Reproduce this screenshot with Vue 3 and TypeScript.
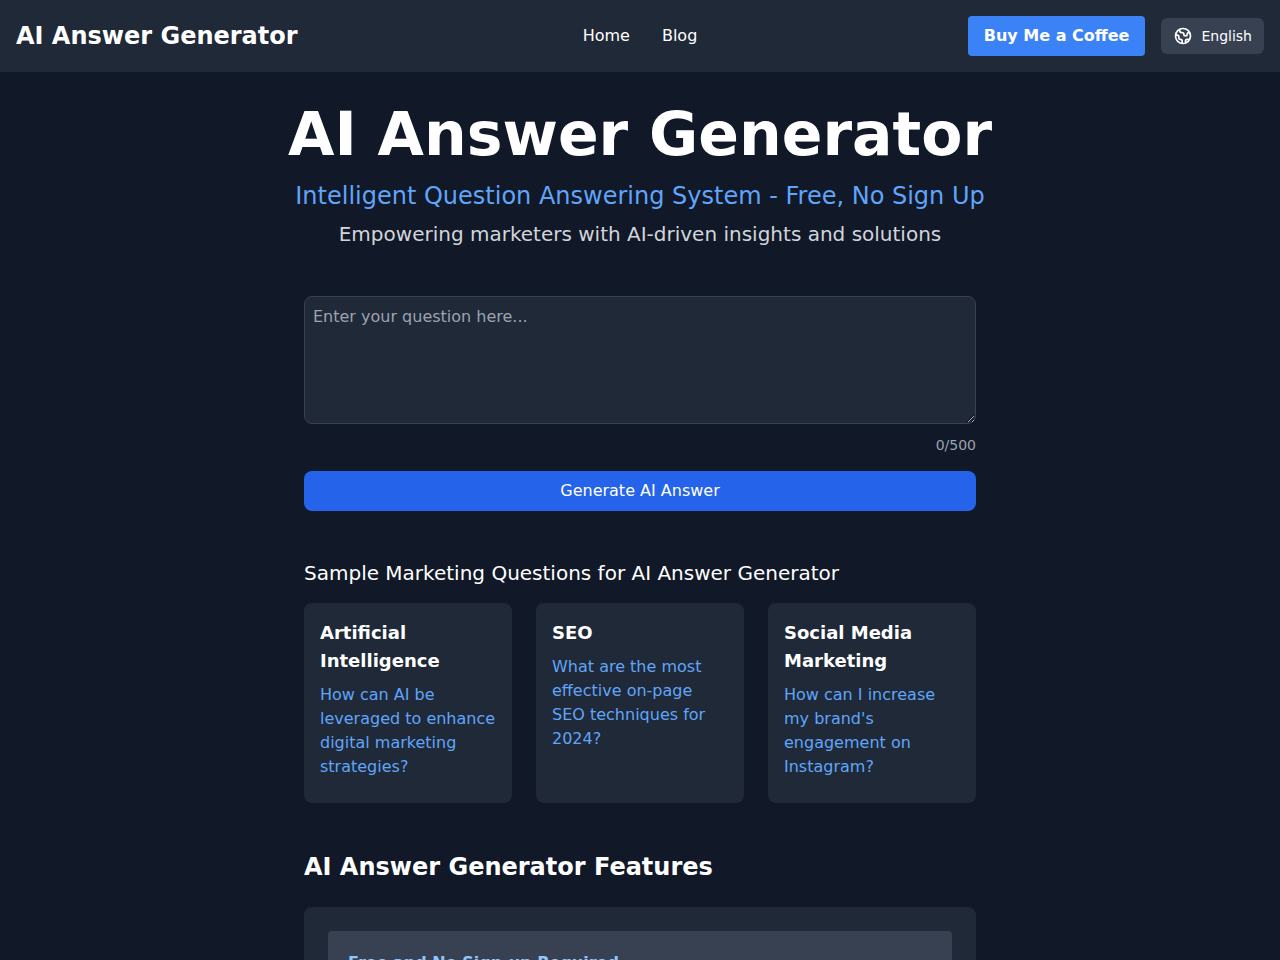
<script setup lang="ts">
import { computed, ref } from 'vue'

interface Sample {
  topic: string
  question: string
}

const maxLength = 500
const question = ref<string>('')
const counter = computed<string>(() => `${question.value.length}/${maxLength}`)

const samples: Sample[] = [
  {
    topic: 'Artificial Intelligence',
    question: 'How can AI be leveraged to enhance digital marketing strategies?',
  },
  {
    topic: 'SEO',
    question: 'What are the most effective on-page SEO techniques for 2024?',
  },
  {
    topic: 'Social Media Marketing',
    question: "How can I increase my brand's engagement on Instagram?",
  },
]

const features: string[] = ['Free and No Sign-up Required']
</script>

<template>
  <div class="page">
    <header class="topbar">
      <a class="brand" href="#">AI Answer Generator</a>
      <nav class="nav">
        <a href="#">Home</a>
        <a href="#">Blog</a>
      </nav>
      <div class="actions">
        <a class="coffee" href="#">Buy Me a Coffee</a>
        <button class="language" type="button">
          <svg class="globe" viewBox="0 0 24 24" fill="none" stroke="currentColor" stroke-width="2" stroke-linecap="round" stroke-linejoin="round" aria-hidden="true">
            <path d="M3.055 11H5a2 2 0 012 2v1a2 2 0 002 2 2 2 0 012 2v2.945M8 3.935V5.5A2.5 2.5 0 0010.5 8h.5a2 2 0 012 2 2 2 0 104 0 2 2 0 012-2h1.064M15 20.488V18a2 2 0 012-2h3.064M21 12a9 9 0 11-18 0 9 9 0 0118 0z" />
          </svg>
          <span>English</span>
        </button>
      </div>
    </header>

    <main class="main">
      <section class="hero">
        <h1>AI Answer Generator</h1>
        <p class="subtitle">Intelligent Question Answering System - Free, No Sign Up</p>
        <p class="tagline">Empowering marketers with AI-driven insights and solutions</p>
      </section>

      <div class="column">
        <form class="ask" @submit.prevent>
          <textarea
            v-model="question"
            aria-label="Your question"
            placeholder="Enter your question here..."
            :maxlength="maxLength"
          ></textarea>
          <p class="counter">{{ counter }}</p>
          <button class="submit" type="submit">Generate AI Answer</button>
        </form>

        <section class="samples">
          <h2>Sample Marketing Questions for AI Answer Generator</h2>
          <div class="cards">
            <article v-for="sample in samples" :key="sample.topic" class="card">
              <h3>{{ sample.topic }}</h3>
              <button type="button" @click="question = sample.question">{{ sample.question }}</button>
            </article>
          </div>
        </section>

        <section class="features">
          <h2>AI Answer Generator Features</h2>
          <div class="panel">
            <article v-for="feature in features" :key="feature" class="feature">
              <h3>{{ feature }}</h3>
            </article>
          </div>
        </section>
      </div>
    </main>
  </div>
</template>

<style>
body {
  margin: 0;
  background: #111827;
}
</style>

<style scoped>
.page {
  min-height: 100vh;
  background: #111827;
  color: #fff;
  font-family: "DejaVu Sans", sans-serif;
  font-size: 16px;
  line-height: 24px;
}

.page *,
.page {
  box-sizing: border-box;
}

h1,
h2,
h3,
p {
  margin: 0;
}

a {
  color: inherit;
  text-decoration: none;
}

button,
textarea {
  font: inherit;
  color: inherit;
}

button {
  border: 0;
  cursor: pointer;
}

.topbar {
  display: grid;
  grid-template-columns: 1fr auto 1fr;
  align-items: center;
  padding: 16px;
  background: #1f2937;
}

.brand {
  font-size: 24px;
  line-height: 32px;
  font-weight: 700;
}

.nav {
  display: flex;
  gap: 32px;
}

.actions {
  display: flex;
  align-items: center;
  justify-content: flex-end;
  gap: 16px;
}

.coffee {
  padding: 8px 16px;
  border-radius: 4px;
  background: #3b82f6;
  font-weight: 700;
}

.language {
  display: flex;
  align-items: center;
  gap: 8px;
  padding: 8px 12px;
  border-radius: 6px;
  background: #374151;
  font-size: 14px;
  line-height: 20px;
}

.globe {
  width: 20px;
  height: 20px;
}

.main {
  padding: 32px 16px;
}

.hero {
  margin-bottom: 48px;
  text-align: center;
}

.hero h1 {
  margin-bottom: 16px;
  font-size: 60px;
  line-height: 60px;
  font-weight: 700;
}

.subtitle {
  margin-bottom: 8px;
  color: #60a5fa;
  font-size: 24px;
  line-height: 32px;
}

.tagline {
  color: #d1d5db;
  font-size: 20px;
  line-height: 28px;
}

.column {
  max-width: 672px;
  margin: 0 auto;
}

.ask {
  margin-bottom: 48px;
}

.ask textarea {
  display: block;
  width: 100%;
  height: 128px;
  padding: 8px;
  border: 1px solid #374151;
  border-radius: 8px;
  background: #1f2937;
  resize: vertical;
}

.ask textarea::placeholder {
  color: #9ca3af;
}

.counter {
  margin: 11px 0 16px;
  color: #9ca3af;
  font-size: 14px;
  line-height: 20px;
  text-align: right;
}

.submit {
  display: block;
  width: 100%;
  padding: 8px 16px;
  border-radius: 8px;
  background: #2563eb;
}

.samples {
  margin-bottom: 48px;
}

.samples h2 {
  margin-bottom: 16px;
  font-size: 20px;
  line-height: 28px;
  font-weight: 400;
}

.cards {
  display: grid;
  grid-template-columns: repeat(3, 1fr);
  gap: 24px;
}

.card {
  padding: 16px 16px 24px;
  border-radius: 8px;
  background: #1f2937;
}

.card h3 {
  margin-bottom: 8px;
  font-size: 18px;
  line-height: 28px;
  font-weight: 700;
}

.card button {
  display: block;
  padding: 0;
  background: none;
  color: #60a5fa;
  text-align: left;
}

.features h2 {
  margin-bottom: 24px;
  font-size: 24px;
  line-height: 32px;
  font-weight: 700;
}

.panel {
  padding: 24px;
  border-radius: 8px;
  background: #1f2937;
}

.feature {
  padding: 20px;
  border-radius: 4px;
  background: #374151;
}

.feature h3 {
  color: #93c5fd;
  font-size: 16px;
  line-height: 24px;
  font-weight: 700;
}
</style>
